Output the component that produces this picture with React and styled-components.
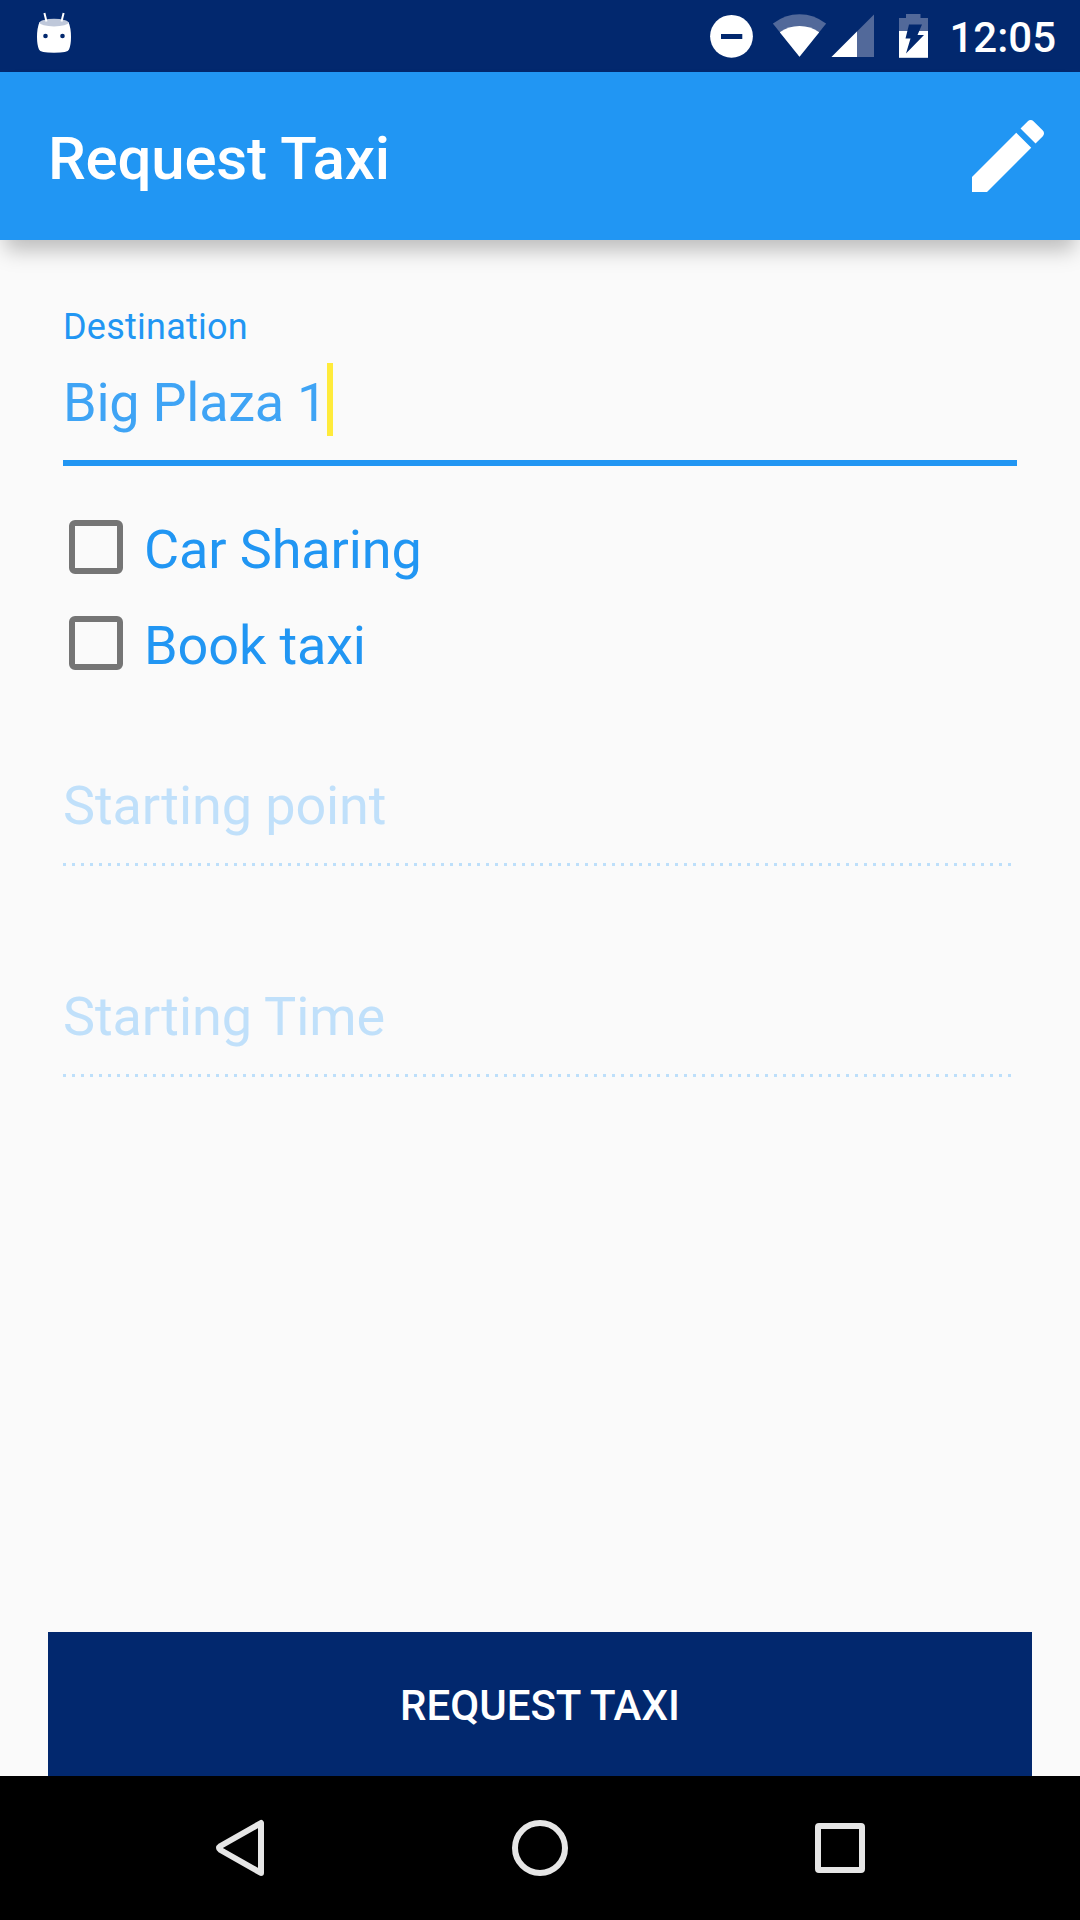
import React from 'react';
import styled, { createGlobalStyle } from 'styled-components';

const GlobalStyle = createGlobalStyle`
  * { box-sizing: border-box; }
  body { margin: 0; background: #fafafa; font-family: Roboto, "Noto Sans", sans-serif; }
`;

const Screen = styled.div`
  width: 1080px;
  height: 1920px;
  display: flex;
  flex-direction: column;
  background: #fafafa;
  overflow: hidden;
`;

const StatusBar = styled.header`
  flex: none;
  height: 72px;
  display: flex;
  align-items: center;
  justify-content: space-between;
  padding: 0 24px 0 36px;
  background: #02286e;
  color: #fff;
`;

const StatusIcons = styled.div`
  display: flex;
  align-items: center;
`;

const StatusIcon = styled.svg`
  display: block;
  flex: none;
  width: ${(p) => p.$w}px;
  height: 72px;
  margin-right: ${(p) => p.$gap || 0}px;
`;

const Clock = styled.span`
  padding-top: 4px;
  font-size: 42px;
  font-weight: 500;
  line-height: 68px;
`;

const AppBar = styled.div`
  flex: none;
  height: 168px;
  display: flex;
  align-items: center;
  justify-content: space-between;
  padding: 0 24px 0 48px;
  background: #2196f3;
  box-shadow: 0 15px 20px -5px rgba(0, 0, 0, 0.25);
`;

const Title = styled.h1`
  margin: 0;
  padding-top: 5px;
  font-size: 60px;
  font-weight: 500;
  line-height: 72px;
  letter-spacing: -0.2px;
  color: #fff;
`;

const EditButton = styled.button`
  display: block;
  width: 96px;
  height: 96px;
  padding: 0;
  border: 0;
  background: none;
  color: #fff;
`;

const Form = styled.main`
  flex: 1;
  display: flex;
  flex-direction: column;
  padding: 66px 63px 0;
`;

const FieldLabel = styled.label`
  font-size: 36px;
  line-height: 42px;
  letter-spacing: 0.24px;
  color: #2196f3;
`;

const ActiveInput = styled.div`
  display: flex;
  height: 73px;
  margin-top: 15px;
  font-size: 54px;
  line-height: 79px;
  letter-spacing: -0.26px;
  color: #3fa4f5;
`;

const Cursor = styled.span`
  width: 6px;
  height: 73px;
  background: #ffeb3b;
`;

const ActiveLine = styled.div`
  height: 6px;
  margin-top: 24px;
  background: #2196f3;
`;

const Options = styled.div`
  margin: 33px 0 78px;
`;

const Option = styled.label`
  display: flex;
  align-items: center;
  gap: 21px;
  height: 96px;
  padding-left: 6px;
  font-size: 54px;
  letter-spacing: -0.12px;
  color: #2196f3;
`;

const Box = styled.span`
  width: 54px;
  height: 54px;
  border: 6px solid #757575;
  border-radius: 6px;
`;

const OptionText = styled.span`
  padding-top: 5px;
  line-height: 64px;
`;

const DisabledField = styled.div`
  height: 97px;
  margin-bottom: 114px;
  font-size: 54px;
  line-height: 73px;
  letter-spacing: -0.1px;
  color: #c0e0fa;
`;

const DottedLine = styled.div`
  width: 954px;
  height: 3px;
  margin-top: 21px;
  background: repeating-linear-gradient(to right, #bddffa 0 3px, transparent 3px 9px);
  background-size: 949px 3px;
  background-repeat: no-repeat;
`;

const SubmitButton = styled.button`
  flex: none;
  height: 144px;
  margin: 0 48px;
  padding: 4px 0 0;
  border: 0;
  background: #02286e;
  color: #fff;
  font-family: inherit;
  font-size: 42px;
  font-weight: 500;
  line-height: 50px;
`;

const NavBar = styled.nav`
  flex: none;
  height: 144px;
  display: flex;
  justify-content: center;
  gap: 156px;
  background: #000;
`;

const NavIcon = styled.svg`
  display: block;
  width: 144px;
  height: 144px;
  fill: none;
  stroke: #e6e6e6;
  stroke-width: 6;
  stroke-linejoin: round;
`;

function Disabled({ children }) {
  return (
    <DisabledField>
      <div>{children}</div>
      <DottedLine />
    </DisabledField>
  );
}

export default function App() {
  return (
    <Screen>
      <GlobalStyle />
      <StatusBar>
        <StatusIcon $w={36} viewBox="36 0 36 72">
          <path d="M39.5 22 Q54 29 68.5 22 Q71 28 71 37 Q71 45 69 49.5 Q68 52.8 54 52.8 Q40 52.8 39 49.5 Q37 45 37 37 Q37 28 39.5 22Z" fill="#fff" />
          <ellipse cx="54" cy="22.6" rx="14.5" ry="3.8" fill="#bfc8da" />
          <path d="M44.4 13 L46.5 21.5 M63.6 13 L61.5 21.5" stroke="#fff" strokeWidth="2" />
          <circle cx="45.5" cy="36" r="2.3" fill="#02286e" />
          <circle cx="62.5" cy="36" r="2.3" fill="#02286e" />
        </StatusIcon>
        <StatusIcons>
          <StatusIcon $w={43} $gap={20} viewBox="710 0 43 72">
            <circle cx="731.5" cy="36.3" r="21.4" fill="#fff" />
            <path d="M721 34h21.300v5H721z" fill="#02286e" />
          </StatusIcon>
          <StatusIcon $w={53} $gap={5} viewBox="773 0 53 72">
            <path d="M799.5 56.8 L772.9 23.6 Q785 14.3 799.5 14.3 Q814 14.3 826.1 23.6Z" fill="#52699a" />
            <path d="M799.5 56.8 L779.8 32.2 Q788.5 26 799.5 26 Q810.5 26 819.2 32.2Z" fill="#fff" />
          </StatusIcon>
          <StatusIcon $w={43} $gap={25} viewBox="831 0 43 72">
            <path d="M831.5 57 L874 14.5 V57Z" fill="#52699a" />
            <path d="M831.5 57 L857 31.5 V57Z" fill="#fff" />
          </StatusIcon>
          <StatusIcon $w={29} $gap={21} viewBox="899 0 29 72">
            <path d="M899 31V18h7v-4h14.500v4h7.500v13z" fill="#52699a" />
            <path d="M899 31h29v26.800h-29z" fill="#fff" />
            <path d="M909 24.500H922L917.500 35H924L906 53.500L910.500 38.500H905.500Z" fill="#02286e" />
          </StatusIcon>
          <Clock>12:05</Clock>
        </StatusIcons>
      </StatusBar>
      <AppBar>
        <Title>Request Taxi</Title>
        <EditButton aria-label="Edit">
          <svg width="96" height="96" viewBox="0 0 24 24" fill="currentColor">
            <path d="M3 17.250V21h3.750L17.810 9.940l-3.750-3.750L3 17.250zM20.710 7.040c.39-.39.39-1.020 0-1.410l-2.340-2.340c-.39-.39-1.020-.39-1.410 0l-1.830 1.830 3.750 3.750 1.830-1.830z" />
          </svg>
        </EditButton>
      </AppBar>
      <Form>
        <FieldLabel>Destination</FieldLabel>
        <ActiveInput>
          <span>Big Plaza 1</span>
          <Cursor />
        </ActiveInput>
        <ActiveLine />
        <Options>
          <Option>
            <Box />
            <OptionText>Car Sharing</OptionText>
          </Option>
          <Option>
            <Box />
            <OptionText>Book taxi</OptionText>
          </Option>
        </Options>
        <Disabled>Starting point</Disabled>
        <Disabled>Starting Time</Disabled>
      </Form>
      <SubmitButton>REQUEST TAXI</SubmitButton>
      <NavBar>
        <NavIcon viewBox="168 1776 144 144">
          <path d="M261 1823 V1873 L220.500 1850 Q217.500 1848 220.500 1846 Z" />
        </NavIcon>
        <NavIcon viewBox="468 1776 144 144">
          <circle cx="540" cy="1848" r="25" />
        </NavIcon>
        <NavIcon viewBox="768 1776 144 144">
          <rect x="818" y="1826" width="44" height="44" rx="1" />
        </NavIcon>
      </NavBar>
    </Screen>
  );
}
